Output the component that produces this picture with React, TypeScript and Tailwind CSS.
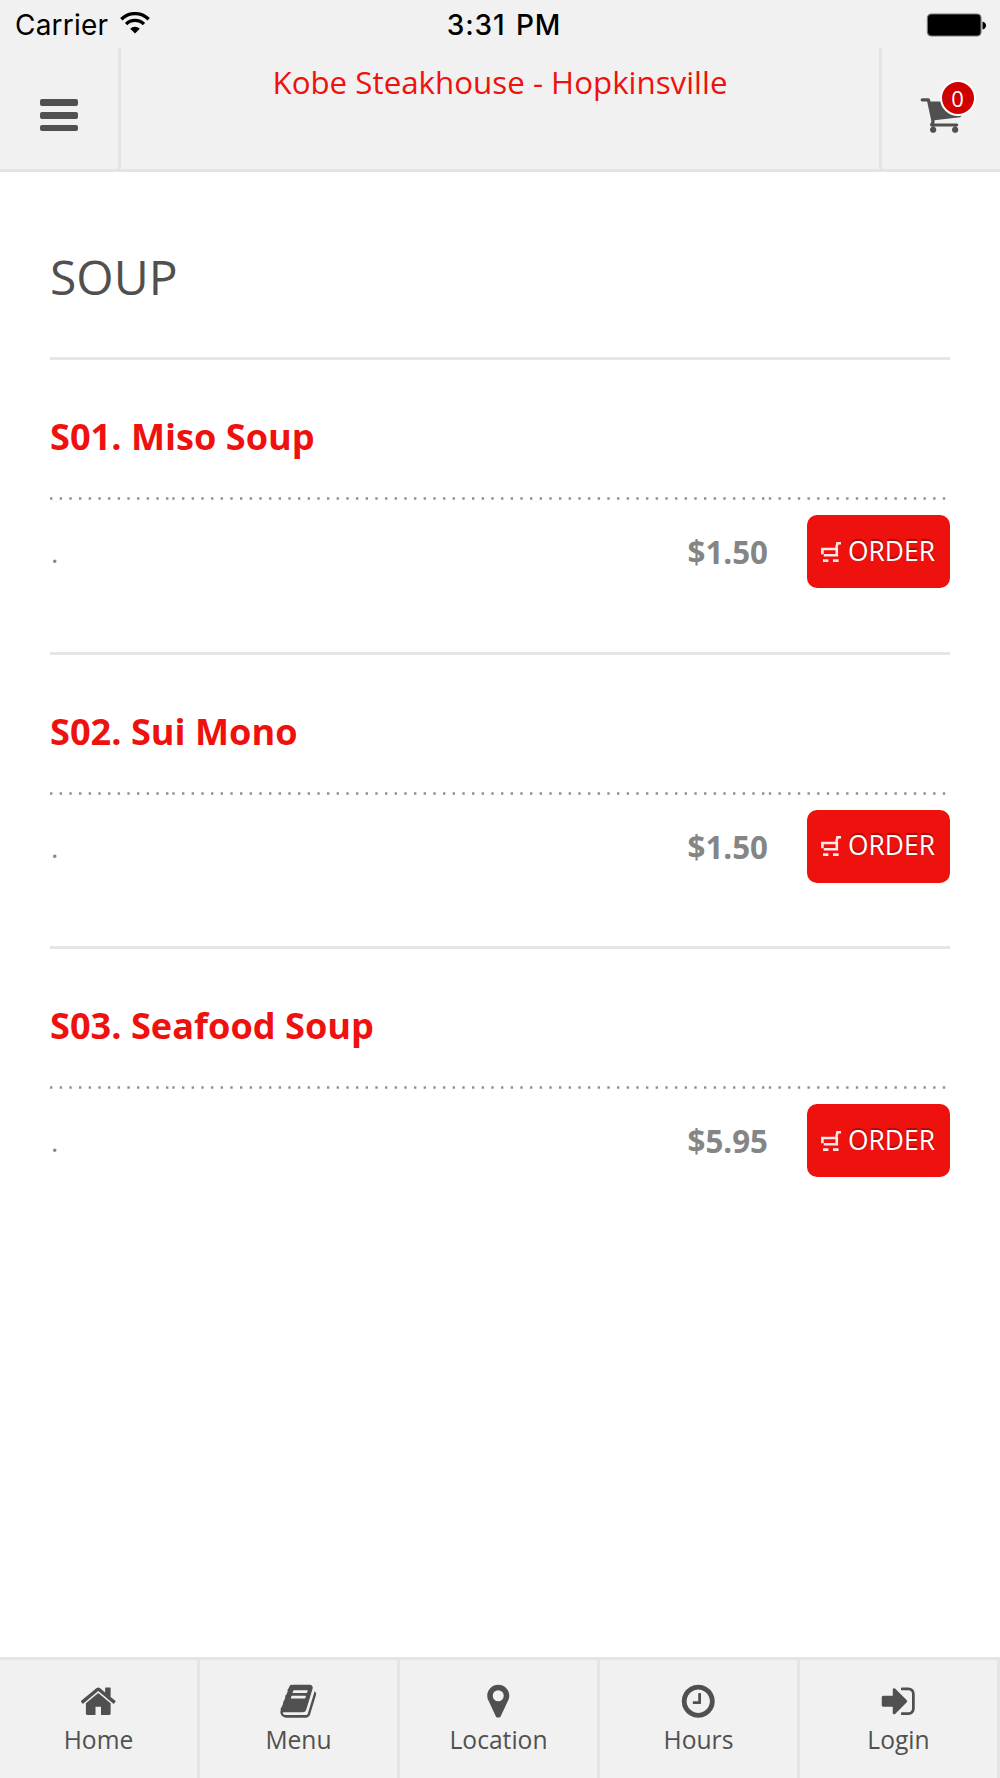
import type { ReactNode } from 'react';

interface SoupItem {
  id: string;
  name: string;
  description: string;
  price: string;
}

const items: SoupItem[] = [
  { id: 's01', name: 'S01. Miso Soup', description: '.', price: '$1.50' },
  { id: 's02', name: 'S02. Sui Mono', description: '.', price: '$1.50' },
  { id: 's03', name: 'S03. Seafood Soup', description: '.', price: '$5.95' },
];

const paths = {
  cart: 'M704 1536q0 52-38 90t-90 38-90-38-38-90 38-90 90-38 90 38 38 90zm896 0q0 52-38 90t-90 38-90-38-38-90 38-90 90-38 90 38 38 90zm128-1088v512q0 24-16.5 42.5t-40.5 21.5l-1044 122q13 60 13 70 0 16-24 64h920q26 0 45 19t19 45-19 45-45 19h-1024q-26 0-45-19t-19-45q0-11 8-31.5t16-36 21.5-40 15.5-29.5l-177-823h-204q-26 0-45-19t-19-45 19-45 45-19h256q16 0 28.5 6.5t19.5 15.5 13 24.5 8 26 5.5 29.5 4.5 26h1201q26 0 45 19t19 45z',
  home: 'M1472 992v480q0 26-19 45t-45 19h-384v-384h-256v384h-384q-26 0-45-19t-19-45v-480q0-1 .5-3t.5-3l575-474 575 474q1 2 1 6zm223-69l-62 74q-8 9-21 11h-3q-13 0-21-7l-692-577-692 577q-12 8-24 7-13-2-21-11l-62-74q-8-10-7-23.5t11-21.5l719-599q32-26 76-26t76 26l244 204v-195q0-14 9-23t23-9h192q14 0 23 9t9 23v408l219 182q10 8 11 21.5t-7 23.5z',
  book: 'M1703 478q40 57 18 129l-275 906q-19 64-76.5 107.5t-122.5 43.5h-923q-77 0-148.5-53.5t-99.5-131.5q-24-67-2-127 0-4 3-27t4-37q1-8-3-21.5t-3-19.5q2-11 8-21t16.5-23.5 16.5-23.5q23-38 45-91.5t30-91.5q3-10 .5-30t-.5-28q3-11 17-28t17-23q21-36 42-92t25-90q1-9-2.5-32t.5-28q4-13 22-30.5t22-22.5q19-26 42.5-84.5t27.5-96.5q1-8-3-25.5t-2-26.5q2-8 9-18t18-23 17-21q8-12 16.5-30.5t15-35 16-36 19.5-32 26.5-23.5 36-11.5 47.5 5.5l-1 3q38-9 51-9h761q74 0 114 56t18 130l-274 906q-36 119-71.5 153.5t-128.5 34.5h-869q-27 0-38 15-11 16-1 43 24 70 144 70h923q29 0 56-15.5t35-41.5l300-987q7-22 5-57 38 15 59 43zm-1064 2q-4 13 2 22.5t20 9.5h608q13 0 25.5-9.5t16.5-22.5l21-64q4-13-2-22.5t-20-9.5h-608q-13 0-25.5 9.5t-16.5 22.5zm-83 256q-4 13 2 22.5t20 9.5h608q13 0 25.5-9.5t16.5-22.5l21-64q4-13-2-22.5t-20-9.5h-608q-13 0-25.5 9.5t-16.5 22.5z',
  marker: 'M1152 640q0-106-75-181t-181-75-181 75-75 181 75 181 181 75 181-75 75-181zm256 0q0 109-33 179l-364 774q-16 33-47.5 52t-67.5 19-67.5-19-46.5-52l-365-774q-33-70-33-179 0-212 150-362t362-150 362 150 150 362z',
  clock: 'M1024 544v448q0 14-9 23t-23 9h-320q-14 0-23-9t-9-23v-64q0-14 9-23t23-9h224v-352q0-14 9-23t23-9h64q14 0 23 9t9 23zm416 352q0-148-73-273t-198-198-273-73-273 73-198 198-73 273 73 273 198 198 273 73 273-73 198-198 73-273zm224 0q0 209-103 385.5t-279.5 279.5-385.5 103-385.5-103-279.5-279.5-103-385.5 103-385.5 279.5-279.5 385.5-103 385.5 103 279.5 279.5 103 385.5z',
  signIn: 'M1312 896q0 26-19 45l-544 544q-19 19-45 19t-45-19-19-45v-288h-448q-26 0-45-19t-19-45v-384q0-26 19-45t45-19h448v-288q0-26 19-45t45-19 45 19l544 544q19 19 19 45zm352-352v704q0 119-84.5 203.5t-203.5 84.5h-320q-13 0-22.5-9.5t-9.5-22.5q0-4-1-20t-.5-26.5 3-23.5 10-19.5 20.5-6.5h320q66 0 113-47t47-113v-704q0-66-47-113t-113-47h-312l-11.5-1-11.5-3-8-5.5-7-9-2-13.5q0-4-1-20t-.5-26.5 3-23.5 10-19.5 20.5-6.5h320q119 0 203.5 84.5t84.5 203.5z',
};

const tabs: { label: string; icon: keyof typeof paths }[] = [
  { label: 'Home', icon: 'home' },
  { label: 'Menu', icon: 'book' },
  { label: 'Location', icon: 'marker' },
  { label: 'Hours', icon: 'clock' },
  { label: 'Login', icon: 'signIn' },
];

function Icon({ name, className }: { name: keyof typeof paths; className: string }) {
  return (
    <svg viewBox="0 0 1792 1792" fill="currentColor" className={className}>
      <path d={paths[name]} />
    </svg>
  );
}

function StatusBar() {
  return (
    <div className="flex h-12 items-center justify-between pr-3.5 pl-[15px] font-['Inter','Liberation_Sans',sans-serif] text-black">
      <div className="flex w-[400px] items-center gap-3">
        <span className="pt-px text-[28px] leading-[50px] tracking-[0.2px]">Carrier</span>
        <svg viewBox="0 0 30 22" className="mt-[-2px] h-[22px] w-[30px]">
          <g fill="none" stroke="black" strokeWidth="3.4">
            <path d="M1.3 7.3a19.4 19.4 0 0 1 27.4 0" />
            <path d="M6.1 12.1a12.6 12.6 0 0 1 17.8 0" />
          </g>
          <path d="M15 21.5l-4.8-4.8a6.8 6.8 0 0 1 9.6 0z" />
        </svg>
      </div>
      <span className="pt-px pl-[7px] text-center text-[28px] leading-[50px] font-medium tracking-[0.9px] whitespace-nowrap [word-spacing:2px]">
        3:31 PM
      </span>
      <div className="flex w-[400px] justify-end">
        <svg viewBox="0 0 60 24" className="mt-px h-6 w-[60px]">
          <rect x="1.4" y="1" width="53.6" height="22" rx="4" fill="black" stroke="#777" strokeWidth="1.2" />
          <path d="M56.5 8.5q3.5 1 3.5 4t-3.5 4z" />
        </svg>
      </div>
    </div>
  );
}

function Header() {
  return (
    <header className="h-[172px] border-b-[3px] border-[#e4e4e4] bg-[#f1f1f1]">
      <StatusBar />
      <div className="flex h-[121px]">
        <button className="flex w-[121px] shrink-0 flex-col gap-[6px] border-r-[3px] border-[#e4e4e4] pt-[51px] pl-10">
          <span className="h-[7px] w-[38px] rounded-[2px] bg-[#505050]" />
          <span className="h-[6.5px] w-[38px] rounded-[2px] bg-[#505050]" />
          <span className="h-[6.5px] w-[38px] rounded-[2px] bg-[#505050]" />
        </button>
        <h1 className="flex-1 pt-3 text-center text-[31.3px] leading-[44px] text-[#ee110e]">
          Kobe Steakhouse - Hopkinsville
        </h1>
        <button className="relative w-[121px] shrink-0 border-l-[3px] border-[#e4e4e4] pt-[11px] pl-[36.5px]">
          <Icon name="cart" className="h-11 w-11 text-[#505050]" />
          <span className="absolute top-[32px] left-[57.5px] flex h-9 w-9 items-center justify-center rounded-full border-2 border-white bg-[#d00000] text-[22px] text-white">
            0
          </span>
        </button>
      </div>
    </header>
  );
}

// Three dash runs, each starting a fresh 9.67px rhythm
function DottedRule() {
  return (
    <svg viewBox="0 0 900 3" className="h-[3px] w-[900px]" stroke="#909090" strokeWidth="2.3" strokeDasharray="2.4 7.267">
      <path d="M0 1.5H119" />
      <path d="M122.3 1.5H716" />
      <path d="M718.8 1.5H900" />
    </svg>
  );
}

function SmallCart() {
  return (
    <svg viewBox="0 0 20 20" className="h-5 w-5" fill="none" stroke="#ffe6e6" strokeWidth="2.6">
      <path d="M20 1.3H16.4L15.2 7H1.4V12.2M2.8 13.2H15.8V6" />
      <path d="M2 18.6H7.4M12 18.6H17.6" />
    </svg>
  );
}

function MenuItem({ item }: { item: SoupItem }) {
  return (
    <li className="h-[294.67px]">
      <div className="h-[3px] bg-[#e6e6e6]" />
      <h3 className="pt-[51px] text-[36.15px] leading-[50px] font-bold text-[#ee110e]">{item.name}</h3>
      <div className="mt-[36px]">
        <DottedRule />
      </div>
      <div className="mt-[15px] flex items-start">
        <p className="flex-1 pt-[17px] pl-px text-[28px] leading-[40px] text-[#858585]">{item.description}</p>
        <span className="mt-[15px] mr-[39px] text-[31.3px] leading-[44px] font-bold text-[#858585]">{item.price}</span>
        <button className="flex h-[73px] w-[143px] items-center gap-[7px] rounded-[10px] bg-[#ee110e] pl-[14px] text-[26.4px] text-white [text-shadow:0_-2px_1px_rgba(0,0,0,0.3)]">
          <SmallCart />
          ORDER
        </button>
      </div>
    </li>
  );
}

function Tab({ label, children }: { label: string; children: ReactNode }) {
  return (
    <a className="flex flex-1 flex-col items-center border-r-[3px] border-[#e4e4e4] pt-[22px] text-[24.6px] leading-[34px] text-[#505050]">
      {children}
      <span className="mt-[2px]">{label}</span>
    </a>
  );
}

export default function App() {
  return (
    <div className="flex h-[1778px] w-[1000px] flex-col overflow-hidden bg-white font-['Open_Sans','Noto_Sans',sans-serif]">
      <Header />
      <main className="flex-1 px-[50px]">
        <h2 className="pt-[72px] text-[48px] leading-[66px] text-[#505050]">SOUP</h2>
        <ul className="mt-[47px]">
          {items.map((item) => (
            <MenuItem key={item.id} item={item} />
          ))}
        </ul>
      </main>
      <nav className="flex h-[121px] border-t-[3px] border-[#e4e4e4] bg-[#f1f1f1]">
        {tabs.map((tab) => (
          <Tab key={tab.label} label={tab.label}>
            <Icon name={tab.icon} className="h-[38.5px] w-[38.5px]" />
          </Tab>
        ))}
      </nav>
    </div>
  );
}
